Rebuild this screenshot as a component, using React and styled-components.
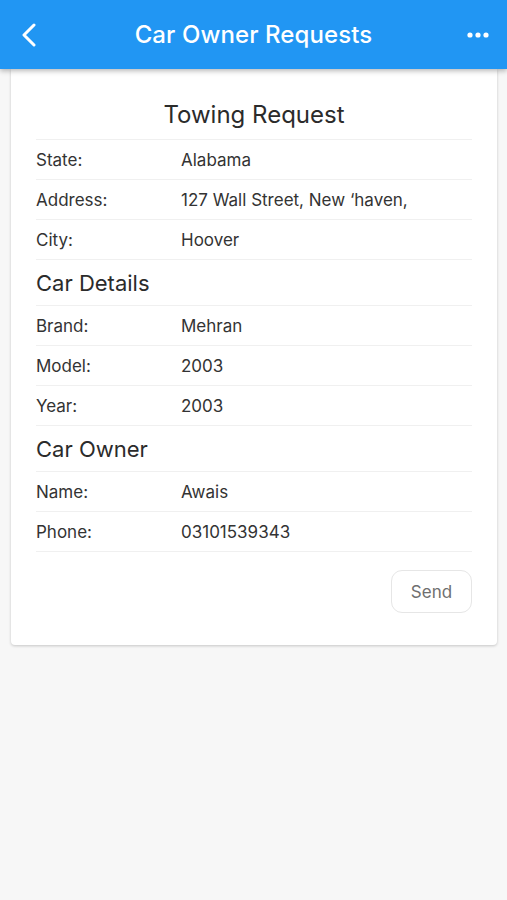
import React from 'react'
import styled, { createGlobalStyle } from 'styled-components'

const GlobalStyle = createGlobalStyle`
  html, body {
    margin: 0;
    padding: 0;
    background: #f7f7f7;
    font-family: Inter, "Open Sans", "Liberation Sans", sans-serif;
  }
`

const Page = styled.div`
  min-height: 900px;
  background: #f7f7f7;
`

const Header = styled.header`
  height: 69px;
  background: #2196f3;
  display: flex;
  align-items: center;
  justify-content: space-between;
  padding: 0 18px 0 18px;
  box-shadow: 0 2px 5px rgba(0, 0, 0, 0.28);
  position: relative;
  z-index: 2;
  box-sizing: border-box;
`

const HeaderTitle = styled.h1`
  margin: 0;
  color: #fff;
  font-size: 24px;
  font-weight: 500;
  letter-spacing: 0.1px;
`

const IconButton = styled.div`
  width: 22px;
  height: 30px;
  display: flex;
  align-items: center;
  justify-content: center;
`

const Card = styled.section`
  margin: 0 10px 0 11px;
  background: #fff;
  border-radius: 0 0 4px 4px;
  box-shadow: 0 1px 3px rgba(0, 0, 0, 0.2);
  padding: 34px 25px 32px 25px;
`

const Title = styled.h2`
  margin: 0;
  text-align: center;
  font-size: 24px;
  font-weight: 400;
  color: #2b2b2b;
  height: 36px;
  line-height: 24px;
  border-bottom: 1px solid #f0f0f0;
`

const SectionTitle = styled.h3`
  margin: 0;
  font-size: 22px;
  font-weight: 400;
  color: #2b2b2b;
  height: 45px;
  line-height: 47px;
  border-bottom: 1px solid #f0f0f0;
`

const Row = styled.div`
  display: grid;
  grid-template-columns: 145px 1fr;
  height: 39px;
  align-items: center;
  border-bottom: 1px solid #f0f0f0;
  font-size: 17px;
  color: #333;
`

const Label = styled.span``
const Value = styled.span``

const Actions = styled.div`
  display: flex;
  justify-content: flex-end;
  padding-top: 18px;
`

const SendButton = styled.button`
  width: 81px;
  height: 43px;
  border: 1px solid #e6e6e6;
  border-radius: 11px;
  background: #fff;
  color: #6f6f6f;
  font-family: inherit;
  font-size: 17px;
`

const sections = [
  {
    title: null,
    rows: [
      ['State:', 'Alabama'],
      ['Address:', '127 Wall Street, New \u2018haven,'],
      ['City:', 'Hoover'],
    ],
  },
  {
    title: 'Car Details',
    rows: [
      ['Brand:', 'Mehran'],
      ['Model:', '2003'],
      ['Year:', '2003'],
    ],
  },
  {
    title: 'Car Owner',
    rows: [
      ['Name:', 'Awais'],
      ['Phone:', '03101539343'],
    ],
  },
]

export default function App() {
  return (
    <Page>
      <GlobalStyle />
      <Header>
        <IconButton>
          <svg width="16" height="24" viewBox="0 0 16 24">
            <path d="M13 2 L3 12 L13 22" fill="none" stroke="#fff" strokeWidth="3" strokeLinecap="round" strokeLinejoin="round" />
          </svg>
        </IconButton>
        <HeaderTitle>Car Owner Requests</HeaderTitle>
        <IconButton>
          <svg width="22" height="8" viewBox="0 0 22 8">
            <circle cx="3" cy="4" r="2.6" fill="#fff" />
            <circle cx="11" cy="4" r="2.6" fill="#fff" />
            <circle cx="19" cy="4" r="2.6" fill="#fff" />
          </svg>
        </IconButton>
      </Header>
      <Card>
        <Title>Towing Request</Title>
        {sections.map((s, i) => (
          <div key={i}>
            {s.title && <SectionTitle>{s.title}</SectionTitle>}
            {s.rows.map(([l, v]) => (
              <Row key={l}>
                <Label>{l}</Label>
                <Value>{v}</Value>
              </Row>
            ))}
          </div>
        ))}
        <Actions>
          <SendButton>Send</SendButton>
        </Actions>
      </Card>
    </Page>
  )
}
